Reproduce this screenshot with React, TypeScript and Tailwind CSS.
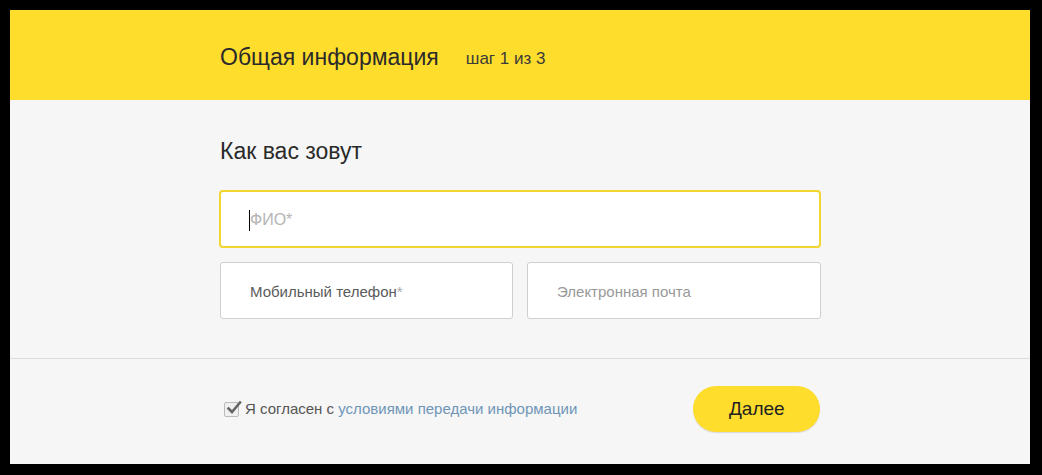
import React from "react";

export default function App() {
  const font = { fontFamily: '"Liberation Sans", Arial, sans-serif' };
  return (
    <div className="w-[1042px] h-[475px] bg-black pt-[10px] pl-[10px]" style={font}>
      <div className="w-[1020px] h-[454px] bg-[#f6f6f6] flex flex-col">
        <div className="h-[90px] bg-[#ffdd2d] flex items-center pl-[210px] pt-[4px]">
          <span className="text-[23px] text-[#2a2a2a] leading-none">Общая информация</span>
          <span className="text-[17px] text-[#3a3a3a] ml-[27px] leading-none pt-[2px]">шаг 1 из 3</span>
        </div>
        <div className="flex flex-col pl-[209px] pt-[40px] h-[258px]">
          <div className="text-[23px] text-[#2a2a2a] leading-none pl-[1px]">Как вас зовут</div>
          <div className="mt-[27px] w-[602px] h-[58px] bg-white border-2 border-[#f3d52f] rounded-[4px] flex items-center pl-[28px] pt-[2px]">
            <span className="w-px h-[21px] bg-black"></span>
            <span className="text-[16px] text-[#b4b4b4]">ФИО*</span>
          </div>
          <div className="flex gap-[14px] mt-[14px] pl-px">
            <div className="w-[293px] h-[57px] bg-white border border-[#cfcfcf] rounded-[3px] flex items-center pl-[29px] pt-[3px]">
              <span className="text-[15px] text-[#5a5a5a]">Мобильный телефон<span className="text-[#aaa]">*</span></span>
            </div>
            <div className="w-[294px] h-[57px] bg-white border border-[#cfcfcf] rounded-[3px] flex items-center pl-[29px] pt-[3px]">
              <span className="text-[15px] text-[#999]">Электронная почта</span>
            </div>
          </div>
        </div>
        <div className="h-px bg-[#dedede]"></div>
        <div className="flex items-center pl-[214px] pt-[27px]">
          <span className="w-[15px] h-[15px] rounded-[2px] border border-[#bbb] bg-[#f0f0f0] relative">
            <svg viewBox="0 0 16 16" className="absolute left-[1px] top-[-3px] w-[16px] h-[16px]">
              <path d="M2.5 8.5 L6 12 L14 2.5" fill="none" stroke="#666" strokeWidth="2.6" strokeLinecap="square" />
            </svg>
          </span>
          <span className="text-[15px] text-[#555] ml-[6px] pt-[1px]">Я согласен с <span className="text-[#6f95b6]">условиями передачи информации</span></span>
          <div className="ml-[116px] w-[127px] h-[46px] rounded-full bg-[#ffdd2d] flex items-center justify-center text-[19px] text-[#222] shadow-[0_1px_1px_rgba(0,0,0,0.12)]">Далее</div>
        </div>
      </div>
    </div>
  );
}
